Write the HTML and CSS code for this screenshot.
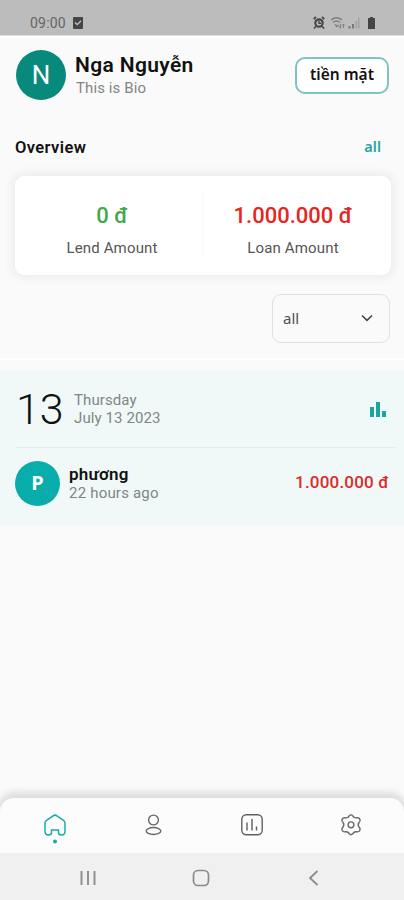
FILE: index.html
```
<!DOCTYPE html>
<html lang="vi">
<head>
<meta charset="utf-8">
<title>Overview</title>
<link rel="stylesheet" href="styles.css">
</head>
<body>
<div class="screen">
  <div class="status">
    <span class="time">09:00</span>
    <svg class="check" width="10" height="12" viewBox="0 0 10 12"><rect width="10" height="12" rx="1" fill="#454545"/><path d="M2 5.5l2.3 2.2L8 3.8" fill="none" stroke="#c4c4c4" stroke-width="1.3"/></svg>
    <svg class="indicators" width="66" height="14" viewBox="0 0 66 14">
      <g fill="none" stroke="#484848"><circle cx="7" cy="7" r="3.700" stroke-width="2.200"/><path d="M7 4.500V7.300H9.200" stroke-width="1.400"/><path d="M1.700 3L4 1M10 1l2.300 2M3.800 10.500L2 12.500M10.200 10.500l1.800 2" stroke-width="1.800"/></g>
      <g fill="none" stroke="#808080" stroke-width="1.500"><path d="M19 4q5.500-4.500 11 0M21 6.500q3.500-3 7 0M23 8.500l2 2 1.500-1.500"/><path d="M28.500 8v4M26.800 10.500l1.700 1.700M31.500 12V8M30 9.500l1.500-1.500 1.500 1.500" stroke-width="1"/></g>
      <path d="M36.500 10h2v2.500h-2zM40 8h2v4.500h-2z" fill="#777"/><path d="M43.500 5h1.700v7.500H43.500zM46 2h1.500v10.500H46z" fill="#a2a2a2"/>
      <path d="M56 2h2V1h3v1h2v11h-7z" fill="#454545"/>
    </svg>
  </div>
  <header class="profile">
    <div class="avatar">N</div>
    <div class="who"><div class="name">Nga Nguyễn</div><div class="bio">This is Bio</div></div>
    <button class="cash">tiền mặt</button>
  </header>
  <div class="overview"><h2>Overview</h2><a>all</a></div>
  <section class="card">
    <div class="stat"><div class="amount lend">0 đ</div><div class="label">Lend Amount</div></div>
    <div class="stat"><div class="amount loan">1.000.000 đ</div><div class="label">Loan Amount</div></div>
  </section>
  <div class="filter">
    <div class="select"><span>all</span><svg width="12" height="8" viewBox="0 0 12 8"><path d="M1 1.500L6 6.300l5-4.800" fill="none" stroke="#484848" stroke-width="1.700"/></svg></div>
  </div>
  <section class="day">
    <div class="date">
      <div class="num">13</div>
      <div class="when"><div>Thursday</div><div>July 13 2023</div></div>
      <svg class="bars" width="16" height="17" viewBox="0 0 16 17"><path d="M2 6v10M8 1v15M14 10v6" stroke="#18a69f" stroke-width="4"/></svg>
    </div>
    <div class="entry">
      <div class="avatar small">P</div>
      <div class="person"><div class="pname">phương</div><div class="ago">22 hours ago</div></div>
      <div class="sum">1.000.000 đ</div>
    </div>
  </section>
  <nav class="tabs">
    <div class="tab active"><svg width="24" height="32" viewBox="0 0 24 32"><path d="M9.700 3.100Q12 1.200 14.300 3.100L20.500 7.400Q22 8.500 22 10.500V18Q22 22 18.500 22Q15.500 22 15.500 19.500V17H8.500V19.500Q8.500 22 5.500 22Q2 22 2 18V10.500Q2 8.500 3.500 7.400Z" fill="none" stroke="#1caaa5" stroke-width="1.500"/><circle cx="12" cy="28.500" r="2" fill="#1caaa5"/></svg></div>
    <div class="tab"><svg width="24" height="32" viewBox="0 0 24 32"><g fill="none" stroke="#666" stroke-width="1.400"><circle cx="11.500" cy="7" r="4.900"/><ellipse cx="11.500" cy="18" rx="7.300" ry="3.500"/></g></svg></div>
    <div class="tab"><svg width="24" height="32" viewBox="0 0 24 32"><g fill="none" stroke="#606060" stroke-width="1.400"><rect x="1.800" y="1.800" width="20.400" height="20" rx="4.500"/><path d="M7 9.500v8M12 6v11.500M16.500 13.500v4"/></g></svg></div>
    <div class="tab"><svg width="24" height="32" viewBox="0 0 24 32"><g fill="none" stroke="#686868" stroke-width="1.400" stroke-linejoin="round"><path d="M10.300 2.800Q12 1 13.700 2.800Q15 5.200 17.500 4.800Q20 4.300 20.900 6.400Q21.700 8.200 20 9.500Q18.400 11.800 20 14.100Q21.700 15.500 20.900 17.200Q20 19.300 17.500 18.800Q15 18.400 13.700 20.800Q12 22.600 10.300 20.800Q9 18.400 6.500 18.800Q4 19.300 3.100 17.200Q2.300 15.500 4 14.100Q5.600 11.800 4 9.500Q2.300 8.200 3.100 6.400Q4 4.300 6.500 4.800Q9 5.200 10.300 2.800Z"/><circle cx="12" cy="11.800" r="2.900"/></g></svg></div>
  </nav>
  <div class="system">
    <svg width="18" height="18" viewBox="0 0 18 18"><path d="M2.500 2v14M9 2v14M15.500 2v14" stroke="#929292" stroke-width="2"/></svg>
    <svg width="18" height="18" viewBox="0 0 18 18"><rect x="1.500" y="1.500" width="15" height="15" rx="4.500" fill="none" stroke="#8a8a8a" stroke-width="1.700"/></svg>
    <svg width="18" height="18" viewBox="0 0 18 18"><path d="M13.500 2L6 9l7.500 7" fill="none" stroke="#8a8a8a" stroke-width="1.800"/></svg>
  </div>
</div>
</body>
</html>
```

FILE: styles.css
```
* { box-sizing: border-box; }
body { margin: 0; font-family: Roboto, "Liberation Sans", sans-serif; color: #111; }
svg { display: block; flex: none; }
.screen { width: 404px; height: 900px; display: flex; flex-direction: column; background: #fafafa; overflow: hidden; }
.status { height: 36px; flex: none; background: #bcbcbc; border-bottom: 1px solid #dedede; display: flex; align-items: flex-start; padding: 15px 26px 0 30px; }
.time { font-size: 14px; line-height: 17px; letter-spacing: 0.2px; color: #666; width: 43px; }
.check { margin-top: 2px; }
.indicators { margin-left: auto; margin-top: 1px; }
.profile { height: 76px; flex: none; display: flex; align-items: center; padding: 0 15px 0 16px; border-top: 2px solid #fff; }
.avatar { width: 50px; height: 50px; border-radius: 50%; background: #078a7b; color: #fff; font-size: 26px; font-weight: 400; display: flex; align-items: center; justify-content: center; flex: none; }
.who { margin-left: 10px; white-space: nowrap; padding-top: 2px; }
.name { font-size: 21px; line-height: 24px; font-weight: 600; letter-spacing: 0.35px; margin-left: -1px; }
.bio { font-size: 15px; line-height: 23px; letter-spacing: 0.1px; color: #858585; }
.cash { margin-left: auto; width: 94px; height: 37px; border: 2px solid #7dc4c2; border-radius: 10px; background: #fff; font: 600 15.500px/18px "Noto Sans", sans-serif; padding: 0 0 3px; color: #111; }
.overview { height: 64px; flex: none; display: flex; justify-content: space-between; align-items: center; padding: 5px 23px 0 15px; }
.overview h2 { margin: 0; padding-top: 1px; font-size: 16.500px; font-weight: 600; letter-spacing: 0.4px; }
.overview a { font: 600 14.500px "Noto Sans", sans-serif; color: #2aa5a1; padding-bottom: 1px; }
.card { height: 99px; flex: none; margin: 0 13px 0 15px; border-radius: 9px; background: #fff; box-shadow: 0 0 9px 3px #ececec; display: flex; padding: 16px 0; }
.stat { flex: 1; text-align: center; padding: 11px 0 0 7px; }
.stat + .stat { border-left: 1px solid #fafafa; padding-left: 0; padding-right: 8px; }
.amount { font-size: 22px; line-height: 26px; font-weight: 500; }
.lend { color: #42a947; }
.loan { color: #e8251c; }
.label { margin-top: 9px; font-size: 15px; line-height: 20px; letter-spacing: 0.15px; color: #555; }
.filter { height: 85px; flex: none; display: flex; justify-content: flex-end; align-items: flex-start; padding: 19px 14px 0; border-bottom: 2px solid #fff; }
.select { width: 118px; height: 49px; border: 1px solid #e0e0e0; border-radius: 9px; display: flex; align-items: center; justify-content: space-between; padding: 0 16px 2px 10px; font: 15px "Noto Sans", sans-serif; color: #505050; }
.day { height: 155px; flex: none; margin-top: 11px; background: #f0f9f8; padding-left: 15px; }
.date { height: 77px; display: flex; align-items: center; border-bottom: 1px solid #e5eded; margin-right: 8px; padding-right: 10px; }
.num { font-size: 43px; font-weight: 300; width: 58px; margin-left: 1px; letter-spacing: 0; }
.when { font-size: 15px; line-height: 18px; color: #808585; letter-spacing: 0.1px; }
.bars { margin-left: auto; }
.entry { height: 70px; display: flex; align-items: center; padding-right: 15px; }
.avatar.small { width: 45px; height: 45px; background: #08acaa; font: 700 20px "Noto Sans", sans-serif; padding-bottom: 2px; }
.person { margin-left: 9px; }
.pname { font-size: 17px; line-height: 20px; font-weight: 600; letter-spacing: 0.2px; }
.ago { font-size: 15px; line-height: 19px; letter-spacing: 0.2px; color: #808585; }
.sum { margin-left: auto; font-size: 17px; font-weight: 500; letter-spacing: 0.2px; color: #db2b28; padding-bottom: 2px; }
.tabs { height: 55px; flex: none; margin-top: auto; background: #fcfcfc; border-radius: 14px 14px 0 0; box-shadow: 0 -4px 6px 2px #dedede; display: flex; justify-content: space-between; padding: 15px 41px 0 43px; }
.tab { width: 24px; }
.system { height: 47px; flex: none; background: #f0f0f0; display: flex; align-items: center; justify-content: space-between; padding: 3px 82px 0 79px; position: relative; }
```
